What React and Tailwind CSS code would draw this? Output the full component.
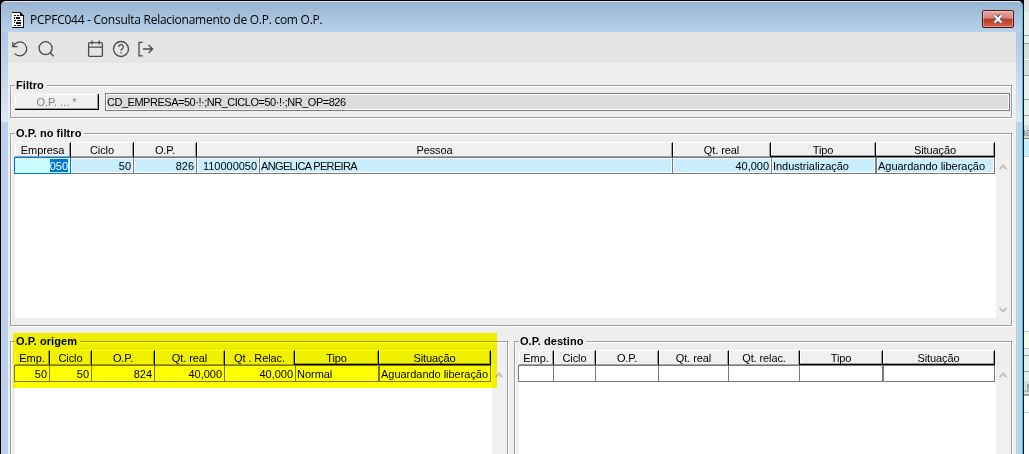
import { clsx } from 'clsx';

const filtroHeader = [
  { label: 'Empresa', width: 'w-[56px]' },
  { label: 'Ciclo', width: 'w-[63px]' },
  { label: 'O.P.', width: 'w-[63px]' },
  { label: 'Pessoa', width: 'w-[476px]' },
  { label: 'Qt. real', width: 'w-[98px]' },
  { label: 'Tipo', width: 'w-[105px]', dark: true },
  { label: 'Situação', width: 'w-[119px]', dark: true },
];

const filtroRow = [
  { value: '050', width: 'w-[56px]', right: true, selected: true },
  { value: '50', width: 'w-[63px]', right: true },
  { value: '826', width: 'w-[63px]', right: true },
  { value: '110000050', width: 'w-[63px]', right: true },
  { value: 'ANGELICA PEREIRA', width: 'w-[413px]', tight: true },
  { value: '40,000', width: 'w-[99px]', right: true },
  { value: 'Industrialização', width: 'w-[104px]' },
  { value: 'Aguardando liberação', width: 'w-[119px]', thick: true },
];

const origemHeader = [
  { label: 'Emp.', width: 'w-[35px]' },
  { label: 'Ciclo', width: 'w-[42px]' },
  { label: 'O.P.', width: 'w-[63px]' },
  { label: 'Qt. real', width: 'w-[70px]' },
  { label: 'Qt . Relac.', width: 'w-[70px]' },
  { label: 'Tipo', width: 'w-[84px]', dark: true },
  { label: 'Situação', width: 'w-[112px]', dark: true },
];

const origemRow = [
  { value: '50', width: 'w-[35px]', right: true },
  { value: '50', width: 'w-[42px]', right: true },
  { value: '824', width: 'w-[63px]', right: true },
  { value: '40,000', width: 'w-[70px]', right: true },
  { value: '40,000', width: 'w-[71px]', right: true },
  { value: 'Normal', width: 'w-[83px]' },
  { value: 'Aguardando liberação', width: 'w-[112px]', thick: true },
];

const destinoHeader = [
  { label: 'Emp.', width: 'w-[35px]' },
  { label: 'Ciclo', width: 'w-[42px]' },
  { label: 'O.P.', width: 'w-[63px]' },
  { label: 'Qt. real', width: 'w-[70px]' },
  { label: 'Qt. relac.', width: 'w-[71px]' },
  { label: 'Tipo', width: 'w-[83px]', dark: true },
  { label: 'Situação', width: 'w-[112px]', dark: true },
];

const destinoRow = [
  { value: '', width: 'w-[35px]' },
  { value: '', width: 'w-[42px]' },
  { value: '', width: 'w-[63px]' },
  { value: '', width: 'w-[70px]' },
  { value: '', width: 'w-[71px]' },
  { value: '', width: 'w-[83px]' },
  { value: '', width: 'w-[112px]', thick: true },
];

const Group = ({ title, className, children }) => (
  <div
    className={clsx(
      'flex flex-col border border-[#a0a0a0] pl-1 shadow-[1px_1px_0_#fff,inset_1px_1px_0_#fff]',
      className
    )}
  >
    <div className="relative -mt-[8px] mb-px h-[14px] w-fit shrink-0 whitespace-nowrap bg-[#eeeeee] pl-px pr-[3px] text-[11px] font-bold leading-[14px] tracking-[0.06px]">
      {title}
    </div>
    {children}
  </div>
);

const Chevron = ({ down }) => (
  <svg width="8" height="6" viewBox="0 0 8 6" fill="none" stroke="#bfbfbf" strokeWidth="1.8">
    <path d={down ? 'M.6 1 4 4.4 7.4 1' : 'M.6 5 4 1.6 7.4 5'} />
  </svg>
);

const Grid = ({ header, row, active, className }) => (
  <div className={clsx('flex', className)}>
    <div className="flex flex-1 flex-col">
      <div className="flex h-[15px] shrink-0">
        {header.map((col) => (
          <div
            key={col.label}
            className={clsx(
              'h-[15px] shrink-0 whitespace-nowrap border-r border-t border-r-black border-t-white bg-[#f0f0f0] text-center leading-[15px] tracking-[-0.1px]',
              'shadow-[inset_-1px_-1px_0_#a0a0a0,inset_1px_0_0_#fff]',
              col.width,
              col.dark && 'border-b border-b-black'
            )}
          >
            {col.label}
          </div>
        ))}
      </div>
      <div className="flex flex-1 flex-col bg-white">
        <div className="-ml-px flex h-[17px] shrink-0 border-l border-[#7a7a7a]">
          {row.map((cell, i) => (
            <div
              key={i}
              className={clsx(
                'h-[17px] shrink-0 whitespace-nowrap border-y border-r border-[#7a7a7a] pl-px pr-[2px] leading-[16px]',
                cell.width,
                cell.right && 'text-right',
                cell.tight ? 'tracking-[-0.65px]' : 'tracking-[-0.03px]',
                cell.thick && 'border-l',
                active && !cell.selected && 'bg-[#c9efff] shadow-[inset_0_0_0_1px_#fff]',
                cell.selected && 'border-[#0078d7] bg-[#c9fbff] shadow-[-1px_0_0_#0078d7]'
              )}
            >
              {cell.selected ? (
                <span className="inline-block h-[13px] bg-[#0078d7] leading-[14px] text-white">{cell.value}</span>
              ) : (
                cell.value
              )}
            </div>
          ))}
        </div>
      </div>
    </div>
    <div className="mt-[15px] flex w-[13px] shrink-0 flex-col items-center justify-between bg-[#f0f0f0] pb-[5px] pt-[7px]">
      <Chevron />
      <Chevron down />
    </div>
  </div>
);

const Toolbar = () => (
  <div className="flex h-[31px] shrink-0 items-center bg-[#e5e5e5] pl-[4px] pt-[2px] text-[#4a4a4a]">
    <svg width="18" height="18" viewBox="0 0 18 18" fill="none" stroke="currentColor" strokeWidth="1.3">
      <path d="M.8 2v4.6h4.8" />
      <path d="M1.2 6.4A7 7 0 1 1 2.6 13.6" />
    </svg>
    <svg className="ml-2" width="18" height="18" viewBox="0 0 18 18" fill="none" stroke="currentColor" strokeWidth="1.3">
      <circle cx="7.6" cy="8.2" r="6.5" />
      <path d="m12.2 12.8 3.4 3.4" />
    </svg>
    <svg className="ml-[31px]" width="18" height="18" viewBox="0 0 18 18" fill="none" stroke="currentColor" strokeWidth="1.3">
      <rect x="1.6" y="2.6" width="13.8" height="13.8" rx="1.2" />
      <path d="M1.6 7.2h13.8M5 .6v4M12.2 .6v4" />
    </svg>
    <svg className="ml-[7px]" width="18" height="18" viewBox="0 0 18 18" fill="none" stroke="currentColor" strokeWidth="1.3">
      <circle cx="9" cy="9" r="7.5" />
      <path d="M6.7 7a2.3 2.3 0 1 1 3.4 2c-.8.5-1.1.9-1.1 1.8" />
      <path d="M9 12.2v1.4" />
    </svg>
    <svg className="ml-[7px]" width="18" height="18" viewBox="0 0 18 18" fill="none" stroke="currentColor" strokeWidth="1.3">
      <path d="M5.8 2.4H2v13.4h3.8M6 9h9.6M11.6 5l4 4-4 4" />
    </svg>
  </div>
);

const TitleBar = () => (
  <div className="flex h-[30px] shrink-0 items-center bg-linear-to-b from-[#99b4d1] to-[#b9d1ea]">
    <svg className="ml-[11px] mt-[5px]" width="12" height="16" viewBox="0 0 12 16" shapeRendering="crispEdges">
      <path d="M0 0h8l4 4v12H0z" fill="#fff" />
      <path d="M0 15v1h12V4h-1v11zM0 0h8v1H0z" fill="#111" />
      <path d="M8 0v4h4V3h-1V2h-1V1H9V0z" fill="#111" />
      <path d="M2 3h2v1H2zM5 3h2v1H5zM2 5h1v2H2zM4 5h4v2H4zM2 8h2v1H2zM5 8h4v1H5zM2 10h1v1H2zM4 10h5v2H4zM2 13h2v1H2zM5 13h4v1H5z" fill="#111" />
    </svg>
    <div className="ml-[6px] mt-[6px] whitespace-nowrap font-['Open_Sans','Noto_Sans',sans-serif] text-[12px] leading-[16px] tracking-[-0.26px]">
      PCPFC044 - Consulta Relacionamento de O.P. com O.P.
    </div>
    <div className="ml-auto mr-[8px] mt-[4px] flex h-[18px] w-[32px] items-center justify-center rounded-[2px] border border-[#47161b] bg-[linear-gradient(#e6a79b_0%,#d6857a_45%,#b93a25_50%,#d4604a_100%)] shadow-[inset_0_0_0_1px_#ffffff55]">
      <svg width="12" height="10" viewBox="0 0 12 10" fill="none">
        <path d="m2.5 1.5 7 7m0-7-7 7" stroke="#535666" strokeWidth="4" />
        <path d="m2.5 1.5 7 7m0-7-7 7" stroke="#fff" strokeWidth="2.2" />
      </svg>
    </div>
  </div>
);

// Slice of the parent window that shows behind this one
const BackWindow = () => (
  <div className="flex w-[5px] shrink-0 flex-col overflow-hidden bg-[#eeeeee] text-[#777]">
    <div className="h-[12px] shrink-0 bg-[#e5e5e5]" />
    <div className="h-[24px] shrink-0 border-b border-[#a0a0a0]" />
    <div className="h-[8px] shrink-0 border-b border-[#a0a0a0]" />
    <div className="h-[16px] shrink-0 border-b border-white bg-[#dcdcdc]" />
    <div className="h-[16px] shrink-0 border-b border-[#a0a0a0] bg-[#dcdcdc]" />
    <div className="h-[24px] shrink-0 border-b border-[#a0a0a0]" />
    <div className="h-[16px] shrink-0 border-b border-[#a0a0a0]" />
    <div className="h-[9px] shrink-0" />
    <div className="h-[14px] shrink-0 border-b border-[#808080] bg-[#dcdcdc] leading-[15px]">
      <div className="-ml-[4px]">na</div>
    </div>
    <div className="mt-[2px] h-[15px] shrink-0 bg-[#c9efff]" />
    <div className="h-[176px] shrink-0 border-y border-[#c8c8c8] bg-white" />
    <div className="h-[17px] shrink-0 border-b border-[#c8c8c8] bg-[#ffffe1]" />
    <div className="h-[7px] shrink-0 border-b border-[#a0a0a0]" />
    <div className="h-[16px] shrink-0 border-b border-[#a0a0a0]" />
    <div className="mt-[9px] h-[15px] shrink-0 border-b-2 border-[#a0a0a0] bg-[#dcdcdc] leading-[15px] tracking-[-0.6px]">.I</div>
    <div className="h-[17px] shrink-0 border-b border-[#c8c8c8] bg-white" />
    <div className="flex-1 bg-white" />
  </div>
);

const App = () => (
  <div className="flex h-[454px] w-[1029px] overflow-hidden bg-black font-['Liberation_Sans',Arial,sans-serif] text-[11px] text-black">
    <div className="ml-px mt-px flex w-[1022px] shrink-0 flex-col overflow-hidden rounded-t-[5px] border-r border-t border-r-[#1fc8f0] border-t-[#e3edf7] bg-[#b9d1ea]">
      <TitleBar />
      <div className="flex flex-1 bg-[linear-gradient(#b0c8e2_0px,#dce8f5_90px,#b9d1ea_90px)] pl-[7px] pr-[6px]">
        <div className="flex flex-1 flex-col bg-[#eeeeee]">
          <Toolbar />
          <Group title="Filtro" className="ml-[2px] mr-[4px] mt-[22px] h-[33px] shrink-0">
            <div className="mt-px flex">
              <div className="h-[16px] w-[84px] shrink-0 border-b border-r border-black bg-[#f0f0f0] text-center leading-[16px] text-[#808080] shadow-[inset_-1px_-1px_0_#a0a0a0,inset_1px_1px_0_#fff]">
                O.P. ... *
              </div>
              <div className="-mt-px ml-[6px] mr-px h-[18px] flex-1 whitespace-nowrap border border-[#7a7a7a] bg-[#dcdcdc] pl-px leading-[17px] tracking-[-0.48px] shadow-[inset_0_0_0_1px_#fff]">
                CD_EMPRESA=50·!·;NR_CICLO=50·!·;NR_OP=826
              </div>
            </div>
          </Group>
          <Group title="O.P. no filtro" className="ml-[2px] mr-[4px] mt-[15px] h-[193px] shrink-0">
            <Grid header={filtroHeader} row={filtroRow} active className="mr-[2px] mt-px h-[176px]" />
          </Group>
          <div className="relative ml-[2px] mr-[4px] mt-[15px] flex h-[140px] shrink-0 gap-[6px]">
            <Group title="O.P. origem" className="w-[498px] shrink-0">
              <Grid header={origemHeader} row={origemRow} className="mr-[2px] mt-px flex-1" />
            </Group>
            <Group title="O.P. destino" className="w-[498px] shrink-0">
              <Grid header={destinoHeader} row={destinoRow} className="mr-[2px] mt-px flex-1" />
            </Group>
            {/* marker pen over the origin order */}
            <div className="absolute -top-[8px] left-[3px] h-[55px] w-[484px] bg-[#ffff00] mix-blend-multiply" />
          </div>
        </div>
      </div>
    </div>
    <div className="w-px shrink-0 bg-black" />
    <BackWindow />
  </div>
);

export default App;
